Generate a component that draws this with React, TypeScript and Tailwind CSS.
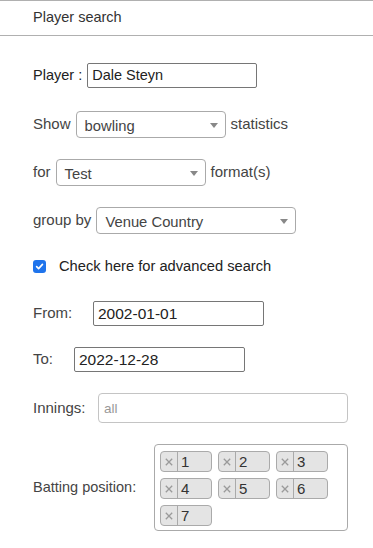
import React from "react";

function Select({ value, width }: { value: string; width: string }) {
  return (
    <div
      className={`${width} h-[27px] border border-[#aaa] rounded-[4px] bg-white flex items-center relative`}
    >
      <span className="pl-[8px] pt-[3px] text-[#444] text-[14.8px] leading-none">{value}</span>
      <span className="absolute right-[7px] top-[11px] w-0 h-0 border-l-[4px] border-r-[4px] border-t-[5px] border-l-transparent border-r-transparent border-t-[#888]" />
    </div>
  );
}

function Tag({ n }: { n: number }) {
  return (
    <div className="w-[52px] h-[21px] bg-[#e4e4e4] border border-[#aaa] rounded-[4px] flex items-stretch">
      <div className="w-[17px] border-r border-[#aaa] flex items-center justify-center">
        <svg width="8" height="8" viewBox="0 0 8 8">
          <path d="M0.8 0.8 L7.2 7.2 M7.2 0.8 L0.8 7.2" stroke="#9a9a9a" strokeWidth="1.3" fill="none" />
        </svg>
      </div>
      <div className="pl-[3px] flex items-center text-[#333] text-[15px] leading-none">{n}</div>
    </div>
  );
}

export default function App() {
  return (
    <div
      className="w-[373px] h-[548px] bg-white overflow-hidden text-[#333]"
      style={{ fontFamily: '"Liberation Sans", Arial, Helvetica, sans-serif' }}
    >
      <div className="h-[36px] border-t border-b border-[#b0b0b0] flex items-center pl-[33px] text-[14.5px] text-[#333]">
        Player search
      </div>
      <div className="pl-[33px] flex flex-col text-[15px]">
        <div className="mt-[27px] h-[25px] flex items-center">
          <span className="text-[#222] text-[14.5px] mr-[5px]">Player :</span>
          <div className="w-[170px] h-[25px] border border-[#767676] rounded-[2px] flex items-center pl-[4px] text-[#222] text-[14.5px]">
            Dale Steyn
          </div>
        </div>
        <div className="mt-[23px] h-[27px] flex items-center">
          <span className="text-[#444] mr-[5px]">Show</span>
          <Select value="bowling" width="w-[150px]" />
          <span className="text-[#444] ml-[5px]">statistics</span>
        </div>
        <div className="mt-[21px] h-[27px] flex items-center">
          <span className="text-[#444] mr-[5px]">for</span>
          <Select value="Test" width="w-[150px]" />
          <span className="text-[#444] ml-[5px]">format(s)</span>
        </div>
        <div className="mt-[21px] h-[27px] flex items-center">
          <span className="text-[#444] mr-[5px]">group by</span>
          <Select value="Venue Country" width="w-[200px]" />
        </div>
        <div className="mt-[22px] h-[20px] flex items-center">
          <span className="w-[13px] h-[13px] rounded-[3px] bg-[#1f74ec] flex items-center justify-center">
            <svg width="9" height="9" viewBox="0 0 10 10">
              <path d="M1.8 5.2 L4 7.4 L8.3 2.6" fill="none" stroke="white" strokeWidth="1.8" strokeLinecap="round" strokeLinejoin="round" />
            </svg>
          </span>
          <span className="ml-[13px] text-[#222] text-[14.7px]">Check here for advanced search</span>
        </div>
        <div className="mt-[25px] h-[25px] flex items-center">
          <span className="w-[60px] text-[#444]">From:</span>
          <div className="w-[171px] h-[25px] border border-[#767676] rounded-[2px] flex items-center pl-[4px] text-[#222] text-[15.5px]">
            2002-01-01
          </div>
        </div>
        <div className="mt-[21px] h-[25px] flex items-center">
          <span className="w-[41px] text-[#444]">To:</span>
          <div className="w-[171px] h-[25px] border border-[#767676] rounded-[2px] flex items-center pl-[4px] text-[#222] text-[15.5px]">
            2022-12-28
          </div>
        </div>
        <div className="mt-[21px] h-[30px] flex items-center">
          <span className="w-[65px] text-[#444]">Innings:</span>
          <div className="w-[250px] h-[30px] border border-[#c4c4c4] rounded-[4px] flex items-center pl-[5px] pt-[2px] text-[#999] text-[13.5px]">
            all
          </div>
        </div>
        <div className="mt-[21px] flex items-center">
          <span className="w-[121px] text-[#444] text-[14.5px]">Batting position:</span>
          <div className="w-[194px] h-[87px] border border-[#aaa] rounded-[4px] pl-[5px] pt-[6px] flex flex-wrap content-start gap-[6px]">
            {[1, 2, 3, 4, 5, 6, 7].map((n) => (
              <Tag key={n} n={n} />
            ))}
          </div>
        </div>
      </div>
    </div>
  );
}
